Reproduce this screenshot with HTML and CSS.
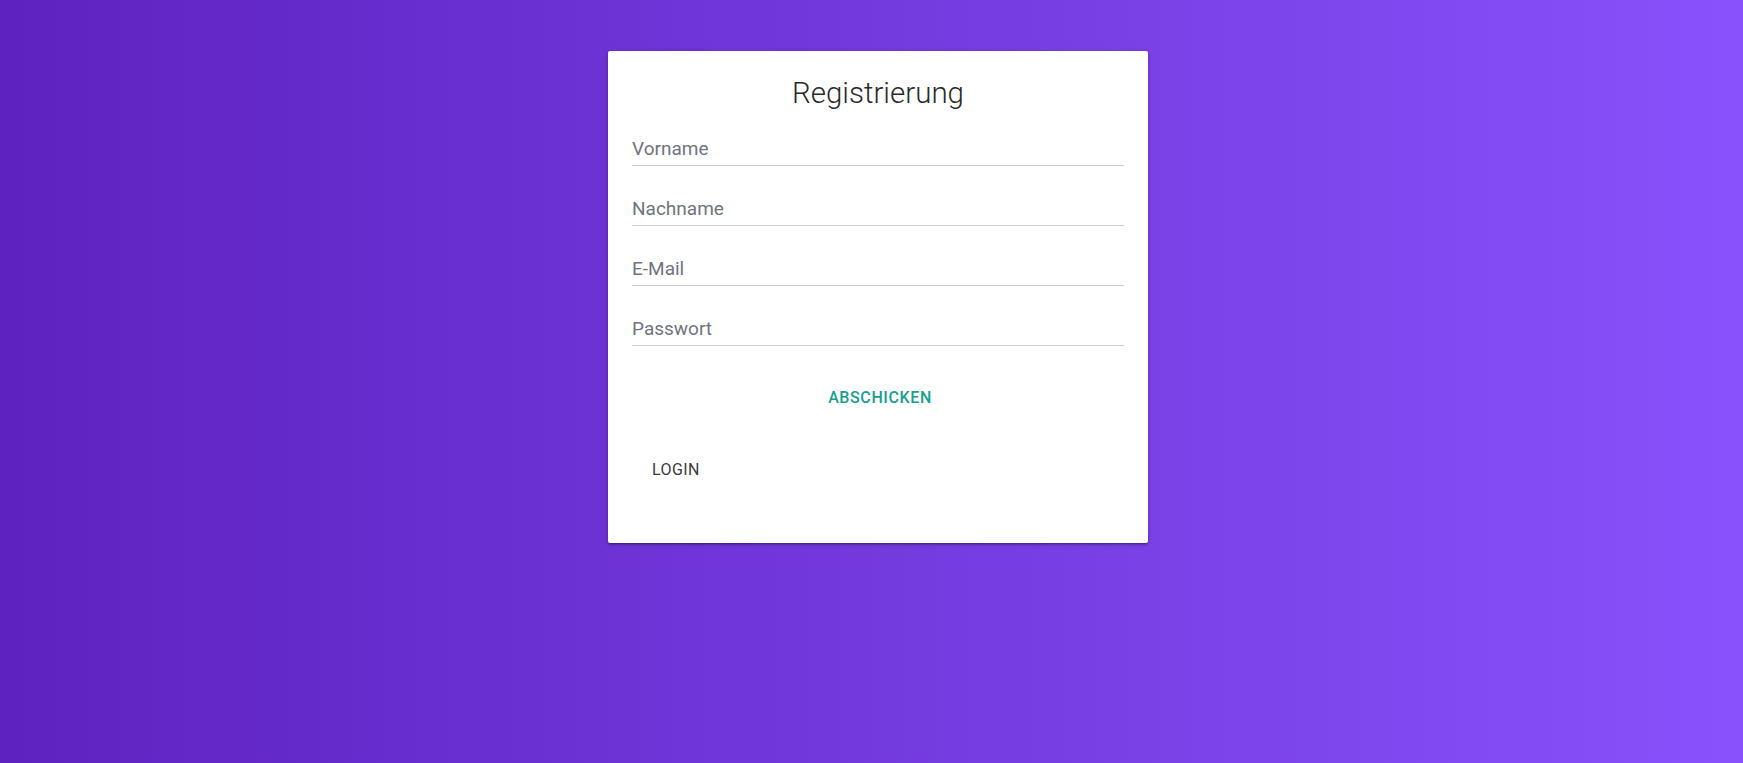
FILE: index.html
```html
<!DOCTYPE html>
<html lang="de">
<head>
<meta charset="utf-8">
<title>Registrierung</title>
<link rel="stylesheet" href="styles.css">
</head>
<body>
<main class="page">
  <section class="card">
    <h1 class="card-title">Registrierung</h1>
    <form class="form">
      <input class="field" type="text" placeholder="Vorname">
      <input class="field" type="text" placeholder="Nachname">
      <input class="field" type="email" placeholder="E-Mail">
      <input class="field" type="password" placeholder="Passwort">
      <div class="submit-row">
        <button class="btn-flat btn-submit" type="button">Abschicken</button>
      </div>
    </form>
    <div class="actions">
      <button class="btn-flat btn-login" type="button">Login</button>
    </div>
  </section>
</main>
</body>
</html>
```

FILE: styles.css
```css
html, body {
  margin: 0;
  padding: 0;
}

body {
  min-height: 100vh;
  background: linear-gradient(to right, #5e22c0 0%, #8851fb 100%);
  font-family: Roboto, "Liberation Sans", sans-serif;
}

.page {
  display: flex;
  justify-content: center;
  align-items: flex-start;
  padding: 51px 0 0 13px;
}

.card {
  width: 540px;
  box-sizing: border-box;
  padding: 24px 24px 55px;
  background: #fff;
  border-radius: 2px;
  box-shadow: 0 2px 2px 0 rgba(0, 0, 0, 0.14),
              0 3px 1px -2px rgba(0, 0, 0, 0.12),
              0 1px 5px 0 rgba(0, 0, 0, 0.2);
}

.card-title {
  margin: 0;
  font-size: 29.5px;
  line-height: 36px;
  font-weight: 300;
  color: #2a2a2a;
  text-align: center;
}

.form {
  display: flex;
  flex-direction: column;
  gap: 31px;
  margin-top: 26px;
}

.field {
  display: block;
  width: 100%;
  box-sizing: content-box;
  height: 24px;
  padding: 0 0 4px;
  margin: 0;
  border: none;
  border-bottom: 1px solid #cccccc;
  outline: none;
  background: transparent;
  font-family: Roboto, "Liberation Sans", sans-serif;
  font-size: 19px;
  line-height: 24px;
  color: #333;
}

.field::placeholder {
  color: #6f7480;
  opacity: 1;
}

.submit-row {
  display: flex;
  justify-content: center;
  margin-top: 3px;
}

.btn-flat {
  border: none;
  background: transparent;
  height: 36px;
  line-height: 36px;
  padding: 0 20px;
  text-transform: uppercase;
  font-family: Roboto, "Liberation Sans", sans-serif;
  cursor: pointer;
}

.btn-submit {
  font-size: 16px;
  font-weight: 500;
  letter-spacing: 0.6px;
  color: #17a08f;
  margin-left: 4px;
}

.actions {
  display: flex;
  margin-top: 36px;
}

.btn-login {
  font-size: 16px;
  font-weight: 400;
  letter-spacing: 0.4px;
  color: #3a3a3a;
  padding-left: 20px;
}
```
